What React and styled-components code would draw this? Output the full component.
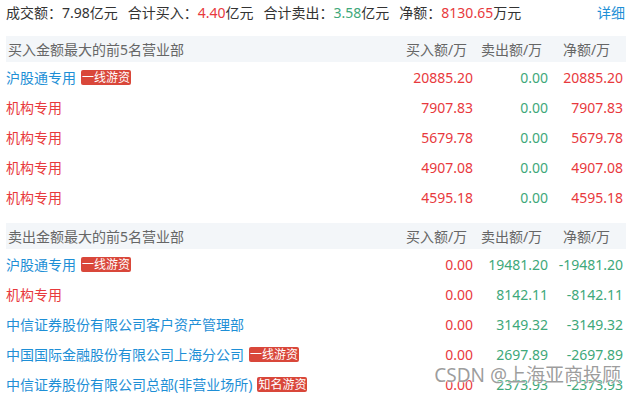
import React from "react";
import styled, { createGlobalStyle } from "styled-components";

const GlobalStyle = createGlobalStyle`
  html, body {
    margin: 0;
    padding: 0;
    background: #fff;
    overflow: hidden;
  }
  body {
    font-family: "Noto Sans", "Noto Sans CJK SC", sans-serif;
    font-size: 14px;
    color: #333;
  }
`;

const RED = "#e8393d";
const GREEN = "#3ea87a";
const BLUE = "#1e8fd6";

const Page = styled.div`
  position: relative;
  width: 636px;
  height: 397px;
  padding: 0 10px 0 6px;
  box-sizing: border-box;
  overflow: hidden;
`;

const Summary = styled.div`
  display: flex;
  align-items: center;
  height: 24px;
  margin-bottom: 12px;
  white-space: nowrap;
`;

const SummaryItem = styled.span`
  margin-right: 10px;
`;

const Num = styled.span`
  color: ${(p) => p.$color};
`;

const Detail = styled.a`
  margin-left: auto;
  color: ${BLUE};
  text-decoration: none;
  padding-right: 1px;
`;

const Section = styled.div`
  margin-bottom: ${(p) => (p.$last ? 0 : "11px")};
`;

const Grid = styled.div`
  display: grid;
  grid-template-columns: 1fr 75px 75px 75px;
  align-items: center;
  padding-right: 2px;
  height: ${(p) => (p.$head ? "26px" : "30px")};
  background: ${(p) => (p.$head ? "#f3f6f9" : "transparent")};
  white-space: nowrap;
`;

const HeadTitle = styled.span`
  color: #666;
  padding-left: 2px;
`;

const HeadCol = styled.span`
  color: #666;
  text-align: center;
`;

const Name = styled.span`
  display: flex;
  align-items: center;
  color: ${(p) => (p.$inst ? RED : BLUE)};
`;

const Tag = styled.span`
  display: inline-flex;
  align-items: center;
  justify-content: center;
  height: 15px;
  padding: 0 1px;
  margin-left: 5px;
  font-size: 12px;
  line-height: 15px;
  color: #fff;
  background: #d9473a;
  border-radius: 2px;
`;

const Value = styled.span`
  text-align: right;
  padding-right: 1px;
  color: ${(p) => p.$color};
`;

const Watermark = styled.div`
  position: absolute;
  right: 15px;
  bottom: 9px;
  font-size: 19px;
  color: rgba(140, 140, 140, 0.85);
  text-shadow: 0 0 2px #fff, 0 0 1px #fff;
  pointer-events: none;
  white-space: nowrap;
`;

const buyRows = [
  { name: "沪股通专用", tag: "一线游资", buy: "20885.20", sell: "0.00", net: "20885.20" },
  { name: "机构专用", inst: true, buy: "7907.83", sell: "0.00", net: "7907.83" },
  { name: "机构专用", inst: true, buy: "5679.78", sell: "0.00", net: "5679.78" },
  { name: "机构专用", inst: true, buy: "4907.08", sell: "0.00", net: "4907.08" },
  { name: "机构专用", inst: true, buy: "4595.18", sell: "0.00", net: "4595.18" },
];

const sellRows = [
  { name: "沪股通专用", tag: "一线游资", buy: "0.00", sell: "19481.20", net: "-19481.20" },
  { name: "机构专用", inst: true, buy: "0.00", sell: "8142.11", net: "-8142.11" },
  { name: "中信证券股份有限公司客户资产管理部", buy: "0.00", sell: "3149.32", net: "-3149.32" },
  { name: "中国国际金融股份有限公司上海分公司", tag: "一线游资", buy: "0.00", sell: "2697.89", net: "-2697.89" },
  { name: "中信证券股份有限公司总部(非营业场所)", tag: "知名游资", buy: "0.00", sell: "2373.93", net: "-2373.93" },
];

const Table = ({ title, rows, last }) => (
  <Section $last={last}>
    <Grid $head>
      <HeadTitle>{title}</HeadTitle>
      <HeadCol>买入额/万</HeadCol>
      <HeadCol>卖出额/万</HeadCol>
      <HeadCol>净额/万</HeadCol>
    </Grid>
    {rows.map((r, i) => (
      <Grid key={i}>
        <Name $inst={r.inst}>
          {r.name}
          {r.tag && <Tag>{r.tag}</Tag>}
        </Name>
        <Value $color={RED}>{r.buy}</Value>
        <Value $color={GREEN}>{r.sell}</Value>
        <Value $color={r.net.startsWith("-") ? GREEN : RED}>{r.net}</Value>
      </Grid>
    ))}
  </Section>
);

const App = () => (
  <Page>
    <GlobalStyle />
    <Summary>
      <SummaryItem>
        成交额：<Num>7.98</Num>亿元
      </SummaryItem>
      <SummaryItem>
        合计买入：<Num $color={RED}>4.40</Num>亿元
      </SummaryItem>
      <SummaryItem>
        合计卖出：<Num $color={GREEN}>3.58</Num>亿元
      </SummaryItem>
      <SummaryItem>
        净额：<Num $color={RED}>8130.65</Num>万元
      </SummaryItem>
      <Detail href="#">详细</Detail>
    </Summary>
    <Table title="买入金额最大的前5名营业部" rows={buyRows} />
    <Table title="卖出金额最大的前5名营业部" rows={sellRows} last />
    <Watermark>CSDN @上海亚商投顾</Watermark>
  </Page>
);

export default App;
